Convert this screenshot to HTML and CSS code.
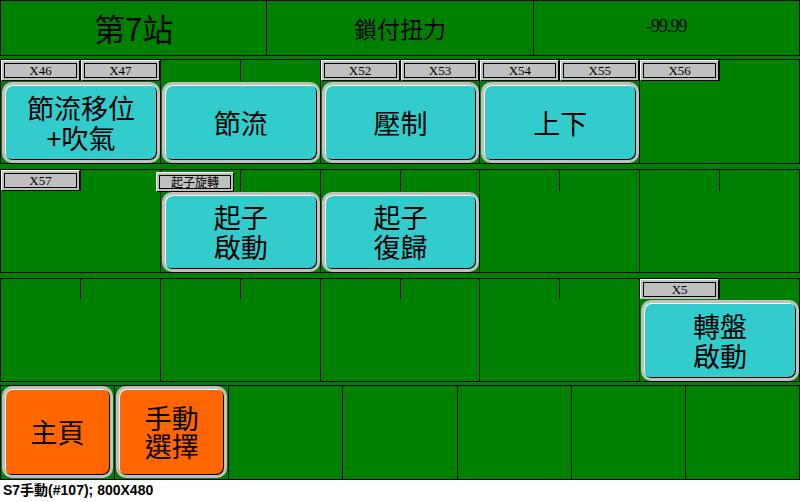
FILE: index.html
```html
<!DOCTYPE html>
<html lang="zh-Hant">
<head>
<meta charset="utf-8">
<title>S7手動</title>
<link rel="stylesheet" href="styles.css">
</head>
<body>
<div class="screen">
  <div class="header">
    <div class="hcell title">第7站</div>
    <div class="hcell name">鎖付扭力</div>
    <div class="hcell value">-99.99</div>
  </div>

  <div class="section s1">
    <div class="labels">
      <div class="lcell"><div class="tag"><div class="tag-in">X46</div></div></div>
      <div class="lcell"><div class="tag"><div class="tag-in">X47</div></div></div>
      <div class="lcell"></div>
      <div class="lcell"></div>
      <div class="lcell"><div class="tag"><div class="tag-in">X52</div></div></div>
      <div class="lcell"><div class="tag"><div class="tag-in">X53</div></div></div>
      <div class="lcell"><div class="tag"><div class="tag-in">X54</div></div></div>
      <div class="lcell"><div class="tag"><div class="tag-in">X55</div></div></div>
      <div class="lcell"><div class="tag"><div class="tag-in">X56</div></div></div>
      <div class="lcell"></div>
    </div>
    <div class="buttons">
      <div class="bcell"><div class="btn cyan">節流移位<br>+吹氣</div></div>
      <div class="bcell"><div class="btn cyan">節流</div></div>
      <div class="bcell"><div class="btn cyan">壓制</div></div>
      <div class="bcell"><div class="btn cyan">上下</div></div>
      <div class="bcell"></div>
    </div>
  </div>

  <div class="section s2">
    <div class="labels">
      <div class="lcell"><div class="tag"><div class="tag-in">X57</div></div></div>
      <div class="lcell"></div>
      <div class="lcell"></div>
      <div class="lcell"></div>
      <div class="lcell"></div>
      <div class="lcell"></div>
      <div class="lcell"></div>
      <div class="lcell"></div>
      <div class="lcell"></div>
      <div class="lcell"></div>
    </div>
    <div class="buttons">
      <div class="bcell"></div>
      <div class="bcell"><div class="btn cyan">起子<br>啟動</div></div>
      <div class="bcell"><div class="btn cyan">起子<br>復歸</div></div>
      <div class="bcell"></div>
      <div class="bcell"></div>
    </div>
    <div class="tag float"><div class="tag-in cjk">起子旋轉</div></div>
  </div>

  <div class="section s3">
    <div class="labels">
      <div class="lcell"></div>
      <div class="lcell"></div>
      <div class="lcell"></div>
      <div class="lcell"></div>
      <div class="lcell"></div>
      <div class="lcell"></div>
      <div class="lcell"></div>
      <div class="lcell"></div>
      <div class="lcell"><div class="tag"><div class="tag-in">X5</div></div></div>
      <div class="lcell"></div>
    </div>
    <div class="buttons">
      <div class="bcell"></div>
      <div class="bcell"></div>
      <div class="bcell"></div>
      <div class="bcell"></div>
      <div class="bcell"><div class="btn cyan">轉盤<br>啟動</div></div>
    </div>
  </div>

  <div class="bottom">
    <div class="ocell"><div class="btn orange">主頁</div></div>
    <div class="ocell"><div class="btn orange tight">手動<br>選擇</div></div>
    <div class="ocell"></div>
    <div class="ocell"></div>
    <div class="ocell"></div>
    <div class="ocell"></div>
    <div class="ocell"></div>
  </div>
</div>
<div class="footer">S7手動(#107); 800X480</div>
</body>
</html>
```

FILE: styles.css
```css
* { box-sizing: border-box; }

html, body {
  margin: 0;
  padding: 0;
  background: #ffffff;
}

body {
  width: 800px;
  height: 502px;
  overflow: hidden;
  font-family: "Noto Sans CJK TC", sans-serif;
  color: #000;
}

.screen {
  width: 800px;
  height: 480px;
  background: #008000;
  display: flex;
  flex-direction: column;
}

.screen > * { flex: none; }

/* header */
.header {
  height: 56px;
  display: grid;
  grid-template-columns: repeat(3, 1fr);
  gap: 1px;
  padding: 1px;
  background: #000;
}

.hcell {
  background: #008000;
  display: flex;
  align-items: center;
  justify-content: center;
}

.title {
  font-size: 31px;
  padding-bottom: 2px;
}

.name {
  font-size: 23px;
  padding-bottom: 1px;
}

.value {
  font-family: "Liberation Serif", serif;
  font-size: 18px;
  letter-spacing: -1px;
  padding-bottom: 3px;
}

/* sections */
.section {
  position: relative;
  background: #000;
  padding: 1px;
  display: flex;
  flex-direction: column;
  gap: 1px;
}

.section > * { flex: none; }

.s1 { margin-top: 3px; }
.s2, .s3 { margin-top: 5px; }

.labels {
  height: 20px;
  display: grid;
  grid-template-columns: repeat(10, 1fr);
  gap: 1px;
}

.s3 .labels { height: 19px; }

.lcell { background: #008000; }

.buttons {
  height: 82px;
  display: grid;
  grid-template-columns: repeat(5, 1fr);
  gap: 1px;
}

.s2 .buttons { height: 81px; }

.bcell {
  background: #008000;
  padding: 1px 0 0 1px;
}

/* address tags */
.tag {
  height: 100%;
  background: #c0c0c0;
  border-top: 1px solid #fff;
  border-left: 1px solid #fff;
  border-right: 1px solid #000;
  border-bottom: 1px solid #000;
  padding: 2px;
}

.tag-in {
  height: 100%;
  border: 1px solid #000;
  display: flex;
  align-items: center;
  justify-content: center;
  font-family: "Liberation Serif", serif;
  font-size: 13px;
  line-height: 1;
}

.tag-in.cjk {
  font-family: "Noto Sans CJK TC", sans-serif;
  font-size: 12px;
}

.tag.float {
  position: absolute;
  left: 156px;
  top: 3px;
  width: 78px;
  height: 20px;
}

/* buttons */
.btn {
  width: 100%;
  height: 100%;
  display: flex;
  align-items: center;
  justify-content: center;
  text-align: center;
  border: 3px solid #c0c0c0;
  border-radius: 10px;
  box-shadow: inset 1px 1px 0 #fff, inset -1px -1px 0 #000;
  font-size: 27px;
  line-height: 30px;
}

.cyan { background: #33cccc; }
.orange { background: #ff6600; }
.tight { line-height: 28px; }

/* bottom row */
.bottom {
  margin-top: 3px;
  height: 95px;
  display: grid;
  grid-template-columns: repeat(7, 1fr);
  gap: 1px;
  padding: 1px;
  background: #000;
}

.ocell {
  background: #008000;
  padding: 0 1px 1px 1px;
}

/* footer */
.footer {
  height: 22px;
  padding: 1px 0 0 3px;
  font-family: "Liberation Sans", "Noto Sans CJK TC", sans-serif;
  font-weight: bold;
  font-size: 14px;
  line-height: 18px;
  background: #fff;
}
```
